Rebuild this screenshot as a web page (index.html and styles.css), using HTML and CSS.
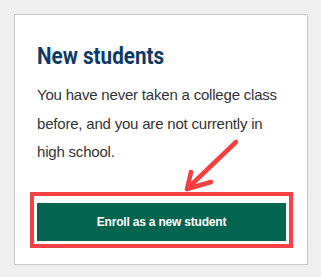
FILE: index.html
```html
<!DOCTYPE html>
<html>
<head>
<meta charset="utf-8">
<link rel="stylesheet" href="styles.css">
</head>
<body>
<div class="card">
  <h2 class="title">New students</h2>
  <p class="desc">You have never taken a college class before, and you are not currently in high school.</p>
  <a class="btn" href="#">Enroll as a new student</a>
</div>
<div class="highlight"></div>
<svg class="arrow" width="321" height="277" viewBox="0 0 321 277">
  <line x1="236" y1="142" x2="189" y2="187" stroke="#f43f3f" stroke-width="4.5" stroke-linecap="round"/>
  <line x1="187" y1="189" x2="191" y2="172" stroke="#f43f3f" stroke-width="4.5" stroke-linecap="round"/>
  <line x1="187" y1="189" x2="211" y2="182" stroke="#f43f3f" stroke-width="4.5" stroke-linecap="round"/>
</svg>
</body>
</html>
```
FILE: styles.css
```css
html, body {
  margin: 0;
  padding: 0;
}
body {
  background: #efefef;
  width: 321px;
  height: 277px;
  position: relative;
  overflow: hidden;
}
.card {
  margin: 14px 0 0 14px;
  background: #fff;
  border: 1px solid #c8c8c8;
  padding: 0 21px 0 22px;
  box-sizing: border-box;
  width: 294px;
  height: 251px;
  display: flex;
  flex-direction: column;
}
.title {
  margin: 26px 0 0 0;
  font-family: Roboto, "Liberation Sans", sans-serif;
  font-weight: bold;
  font-size: 24px;
  line-height: 30px;
  color: #0d3a66;
  transform: scaleX(0.86);
  transform-origin: left center;
  white-space: nowrap;
}
.desc {
  margin: 10px 0 0 0;
  font-family: "Liberation Sans", Arial, sans-serif;
  font-size: 15px;
  line-height: 28.5px;
  letter-spacing: -0.2px;
  color: #333;
}
.btn {
  margin-top: auto;
  margin-bottom: 23px;
  height: 38px;
  display: flex;
  align-items: center;
  justify-content: center;
  background: #03654f;
  color: #fff;
  font-family: "Liberation Sans", Arial, sans-serif;
  font-weight: bold;
  font-size: 12px;
  letter-spacing: -0.2px;
  text-decoration: none;
}
.highlight {
  position: absolute;
  left: 30px;
  top: 192px;
  width: 263px;
  height: 56px;
  border: 4px solid #f44242;
  box-sizing: border-box;
}
.arrow {
  position: absolute;
  left: 0;
  top: 0;
}
```
